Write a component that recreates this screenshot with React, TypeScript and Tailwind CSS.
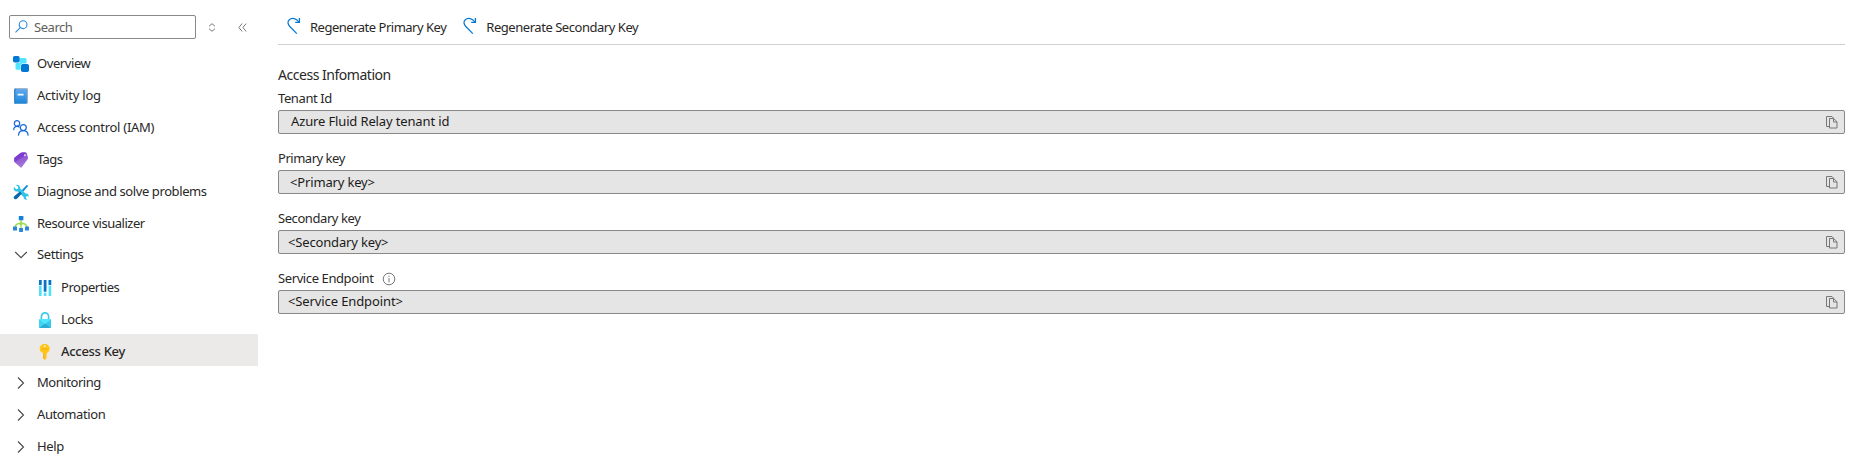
import type { ReactNode } from "react";

function SearchIcon() {
  return (
    <svg width="14" height="14" viewBox="0 0 14 14" fill="none" stroke="#2b88d8" strokeWidth="1.1">
      <circle cx="8.100" cy="4.700" r="3.900" />
      <path d="M5.300 7.600.5 12.400" />
    </svg>
  );
}

function OverviewIcon() {
  return (
    <svg width="16" height="16" viewBox="0 0 16 16">
      <rect x="6.5" y="2" width="7" height="6.5" rx="1.4" fill="#50e6ff" />
      <rect x="2.5" y="7" width="6.5" height="6.8" rx="1.4" fill="#50e6ff" />
      <rect x="0" y="0" width="6.6" height="6.4" rx="1.6" fill="#0078d4" />
      <rect x="7.6" y="7.6" width="8.4" height="8.4" rx="1.8" fill="#fff" />
      <rect x="8" y="8" width="8" height="8" rx="1.8" fill="#0078d4" />
    </svg>
  );
}

function ActivityIcon() {
  return (
    <svg width="16" height="16" viewBox="0 0 16 16">
      <defs>
        <linearGradient id="book" x1="0" y1="0" x2="0" y2="1">
          <stop offset="0" stopColor="#5eaaf0" />
          <stop offset="1" stopColor="#1a86dc" />
        </linearGradient>
      </defs>
      <rect x="1.200" y="0.200" width="13.600" height="15.600" rx="1.200" fill="#7f9fb8" />
      <rect x="1.200" y="0.800" width="2.200" height="15" rx="1" fill="#2b80cb" />
      <rect x="2.400" y="1.200" width="11.200" height="14.400" rx="0.600" fill="url(#book)" />
      <rect x="4.600" y="5.800" width="6" height="1.800" rx="0.300" fill="#f2f9fe" />
    </svg>
  );
}

function PeopleIcon() {
  return (
    <svg width="16" height="16" viewBox="0 0 16 16" fill="none" stroke="#1968d8" strokeWidth="1.2">
      <circle cx="4" cy="3.400" r="2.700" />
      <path d="M.7 10.300C.7 7.800 2 6.300 4 6.300c1 0 1.800.4 2.500 1" />
      <circle cx="10.300" cy="7.600" r="3" />
      <path d="M5.400 15.600c.2-3 2.200-4.900 4.900-4.900s4.700 1.900 4.900 4.900" />
    </svg>
  );
}

function TagIcon() {
  return (
    <svg width="16" height="16" viewBox="0 0 16 16">
      <defs>
        <linearGradient id="tag" x1="0" y1="0" x2="0.3" y2="1">
          <stop offset="0" stopColor="#7a35cf" />
          <stop offset="1" stopColor="#a67ad9" />
        </linearGradient>
      </defs>
      <path d="M1.400 5.800 7.500 1Q8 .5 8.700.4L12 .2Q13.300.2 13.700 1.200L15 5.500Q15.100 6.500 14.600 7.200L8.800 15.200Q8.100 16 7.300 15.300L1.700 10.300Q1.200 9.700 1.200 9V6.500Q1.200 6 1.400 5.800Z" fill="url(#tag)" />
      <path d="M1.400 5.800 7.500 1Q8 .5 8.700.4L12 .2 10.500 4.500 1.500 10Q1.200 9.700 1.200 9V6.500Q1.200 6 1.400 5.800Z" fill="#7431cb" opacity=".6" />
      <circle cx="12" cy="3.300" r="1" fill="#e9dcf8" />
    </svg>
  );
}

function ToolsIcon() {
  return (
    <svg width="16" height="16" viewBox="0 0 16 16">
      <path d="M13.900.7 15.200 2 10.200 7.700 8.700 6.200Z" fill="#1490d8" />
      <path d="M3.100.9 5.300 3 4.900 4.700 3.200 5.200 1 3.100C.3 5 .9 6.500 2.400 7.200c.9.400 1.700.4 2.500.2l5.700 5.700c-.1 1.800 1.500 3.100 3.900 2.500l-1.700-1.700.4-1.500 1.600-.4 1 1c.3-2.200-1.200-3.700-3.200-3.400L7.200 4.500C7.500 2 5.500.1 3.100.9Z" fill="#32c4e8" />
      <path d="M6.900 7.600 8.800 9.500 4.300 14.600Q2.700 16 1.300 14.800T1.500 12Z" fill="#0d67a8" />
    </svg>
  );
}

function VisualizerIcon() {
  return (
    <svg width="16" height="16" viewBox="0 0 16 16">
      <path d="M8 4v9M2 11.500C2.200 8.800 4.500 7.300 8 7.300s5.800 1.500 6 4.200" fill="none" stroke="#9bdc50" strokeWidth="1.4" />
      <circle cx="8" cy="7.600" r="1.700" fill="#9bdc50" />
      <rect x="5.800" y="0" width="4.600" height="4.300" rx=".3" fill="#1580da" />
      <rect x="0" y="10.600" width="4" height="3.900" rx=".3" fill="#2b88d8" />
      <rect x="6.100" y="12" width="3.900" height="3.900" rx=".3" fill="#2b88d8" />
      <rect x="12" y="10.600" width="4" height="3.900" rx=".3" fill="#2b88d8" />
    </svg>
  );
}

function PropertiesIcon() {
  return (
    <svg width="16" height="16" viewBox="0 0 16 16">
      <rect x="2" y="0" width="2.600" height="16" fill="#50e0f8" />
      <rect x="6.800" y="0" width="2.600" height="16" fill="#50e0f8" />
      <rect x="11.600" y="0" width="2.600" height="16" fill="#50e0f8" />
      <rect x="2" y="0" width="2.600" height="5" fill="#0f6fc6" />
      <rect x="6.800" y="0" width="2.600" height="11.500" fill="#0f6fc6" />
      <rect x="11.600" y="0" width="2.600" height="5" fill="#0f6fc6" />
      <path d="M1.500 5.500h3.400M6.400 12.500h3.400M11.200 5.500h3.400" stroke="#e8fbff" strokeWidth=".8" />
    </svg>
  );
}

function LockIcon() {
  return (
    <svg width="16" height="16" viewBox="0 0 16 16">
      <path d="M4.400 8V4.500a3.600 3.600 0 0 1 7.200 0V8" fill="none" stroke="#3ccbe8" strokeWidth="1.700" />
      <rect x="2" y="7" width="12" height="9" rx=".8" fill="#50e6ff" />
      <path d="M2 7.300 8 12.300 2 16Z" fill="#40d4f2" />
      <path d="M14 7.300 8 12.300 14 16Z" fill="#38c8ea" />
      <path d="M2.200 16 8 11.600 13.800 16Z" fill="#2bacd2" />
    </svg>
  );
}

function KeyIcon() {
  return (
    <svg width="16" height="16" viewBox="0 0 16 16">
      <path d="M7.700 0C10.500 0 12.700 2 12.700 4.700c0 1.900-.9 3.200-2.800 4.200v.8l-.6.8.6.8-.6.9.6.9-.6.8v.6L7.900 16 6.300 14.500V9C3.700 8.300 2.700 6.700 2.700 4.700 2.700 2 4.900 0 7.700 0Z" fill="#ffc61a" />
      <path d="M6.300 9v5.500L7.500 15.600V9.300Z" fill="#fbab18" />
      <rect x="4.900" y="4.600" width="5.600" height=".9" rx=".4" fill="#f5a512" />
      <circle cx="7.700" cy="2.200" r="1" fill="#fff0b5" />
    </svg>
  );
}

function Chevron({ open }: { open?: boolean }) {
  return (
    <svg width="16" height="16" viewBox="0 0 16 16" fill="none" stroke="#484644" strokeWidth="1.1">
      <path d={open ? "M2.200 5 8 10.700 13.800 5" : "M5 2.500 10.500 8 5 13.500"} />
    </svg>
  );
}

function RegenerateIcon() {
  return (
    <svg width="16" height="18" viewBox="0 0 16 18" fill="none" stroke="#0078d4" strokeWidth="1.25">
      <path d="M9.800 16.600 3 9.700C.5 7.200.4 4.400 2.300 2.700c2.800-2.500 7.100-1.400 9.500 2.300" />
      <path d="M12.400 1v4.400H8.200" />
    </svg>
  );
}

function CopyIcon() {
  return (
    <svg width="12" height="13" viewBox="0 0 12 13" fill="none" stroke="#777" strokeWidth="1">
      <path d="M3.500 10.500h-3V.5H6L7.500 2" />
      <path d="M3.500 2.500h4.200l3.300 3.300v6.200H3.500Z" />
      <path d="M7.500 2.500V6H11" />
    </svg>
  );
}

type Item = { label: string; icon: ReactNode; tracking: string; nested?: boolean; active?: boolean; group?: boolean };

const items: Item[] = [
  { label: "Overview", icon: <OverviewIcon />, tracking: "tracking-[-0.42px]" },
  { label: "Activity log", icon: <ActivityIcon />, tracking: "tracking-[-0.22px]" },
  { label: "Access control (IAM)", icon: <PeopleIcon />, tracking: "tracking-[-0.28px]" },
  { label: "Tags", icon: <TagIcon />, tracking: "tracking-[-0.6px]" },
  { label: "Diagnose and solve problems", icon: <ToolsIcon />, tracking: "tracking-[-0.4px]" },
  { label: "Resource visualizer", icon: <VisualizerIcon />, tracking: "tracking-[-0.47px]" },
  { label: "Settings", icon: <Chevron open />, tracking: "tracking-[-0.38px]", group: true },
  { label: "Properties", icon: <PropertiesIcon />, tracking: "tracking-[-0.48px]", nested: true },
  { label: "Locks", icon: <LockIcon />, tracking: "tracking-[-0.45px]", nested: true },
  { label: "Access Key", icon: <KeyIcon />, tracking: "tracking-[-0.3px]", nested: true, active: true },
  { label: "Monitoring", icon: <Chevron />, tracking: "tracking-[-0.45px]", group: true },
  { label: "Automation", icon: <Chevron />, tracking: "tracking-[-0.4px]", group: true },
  { label: "Help", icon: <Chevron />, tracking: "tracking-[-0.35px]", group: true },
];

const fields = [
  { label: "Tenant Id", value: "Azure Fluid Relay tenant id", pad: "pl-3", labelTracking: "tracking-[-0.4px]", tracking: "tracking-[-0.14px]" },
  { label: "Primary key", value: "<Primary key>", pad: "pl-[11px]", labelTracking: "tracking-[-0.48px]", tracking: "tracking-[-0.16px] pt-0.5" },
  { label: "Secondary key", value: "<Secondary key>", pad: "pl-[9px]", labelTracking: "tracking-[-0.43px]", tracking: "tracking-[-0.16px] pt-0.5" },
  { label: "Service Endpoint", value: "<Service Endpoint>", pad: "pl-[9px]", labelTracking: "tracking-[-0.4px]", tracking: "tracking-[-0.11px]", info: true },
];

export default function App() {
  return (
    <div className="flex h-[471px] w-full overflow-hidden whitespace-nowrap bg-white font-['Noto_Sans',sans-serif] text-[13px] text-[#292827]">
      <aside className="w-[258px] shrink-0">
        <div className="flex h-[46px] items-start pl-[9px] pt-[15px]">
          <div className="flex h-6 w-[187px] items-center gap-[5px] rounded-[2px] border border-[#8a8886] pl-[5px] text-[#605e5c]">
            <SearchIcon />
            <span className="pt-px tracking-[-0.45px]">Search</span>
          </div>
          <svg className="ml-3 mt-2 text-[#777]" width="8" height="9" viewBox="0 0 8 9" fill="none" stroke="currentColor">
            <path d="M1 3.300 4 .7l3 2.600M1 5.700l3 2.600 3-2.600" />
          </svg>
          <svg className="ml-[22px] mt-2 text-[#777]" width="9" height="9" viewBox="0 0 9 9" fill="none" stroke="currentColor">
            <path d="M4.200.5.900 4.500l3.300 4M8.200.5 4.900 4.500l3.300 4" />
          </svg>
        </div>
        <nav>
          {items.map((item) => (
            <div
              key={item.label}
              className={`flex h-8 items-center gap-2 ${item.group ? "pt-0.5" : "pt-[3px]"} ${item.nested ? "pl-[37px]" : "pl-[13px]"} ${item.active ? "bg-[#ebeae9] font-medium" : ""}`}
            >
              {item.icon}
              <span className={item.tracking}>{item.label}</span>
            </div>
          ))}
        </nav>
      </aside>
      <main className="ml-5 w-[1567px]">
        <div className="flex h-[45px] border-b border-[#d2d0ce] pl-[9px] pt-[17px]">
          <div className="flex items-start gap-[7px]">
            <RegenerateIcon />
            <span className="leading-5 tracking-[-0.49px]">Regenerate Primary Key</span>
          </div>
          <div className="ml-[17px] flex items-start gap-[7px]">
            <RegenerateIcon />
            <span className="leading-5 tracking-[-0.46px]">Regenerate Secondary Key</span>
          </div>
        </div>
        <h2 className="mt-5 h-[23px] text-[14px] leading-5 tracking-[-0.47px]">Access Infomation</h2>
        <div className="flex flex-col gap-[14px]">
          {fields.map((field) => (
            <div key={field.label}>
              <div className="flex h-[22px] items-center gap-2">
                <span className={field.labelTracking}>{field.label}</span>
                {field.info && (
                  <svg width="14" height="14" viewBox="0 0 14 14" fill="none" stroke="#777">
                    <circle cx="7" cy="7" r="5.800" />
                    <path d="M7 6v4.300M7 3.700v1.200" />
                  </svg>
                )}
              </div>
              <div className={`flex h-6 items-center justify-between rounded-[2px] border border-[#8a8886] bg-[#e5e5e5] pr-[6px] text-[#1b1a19] ${field.pad}`}>
                <span className={field.tracking}>{field.value}</span>
                <CopyIcon />
              </div>
            </div>
          ))}
        </div>
      </main>
    </div>
  );
}
